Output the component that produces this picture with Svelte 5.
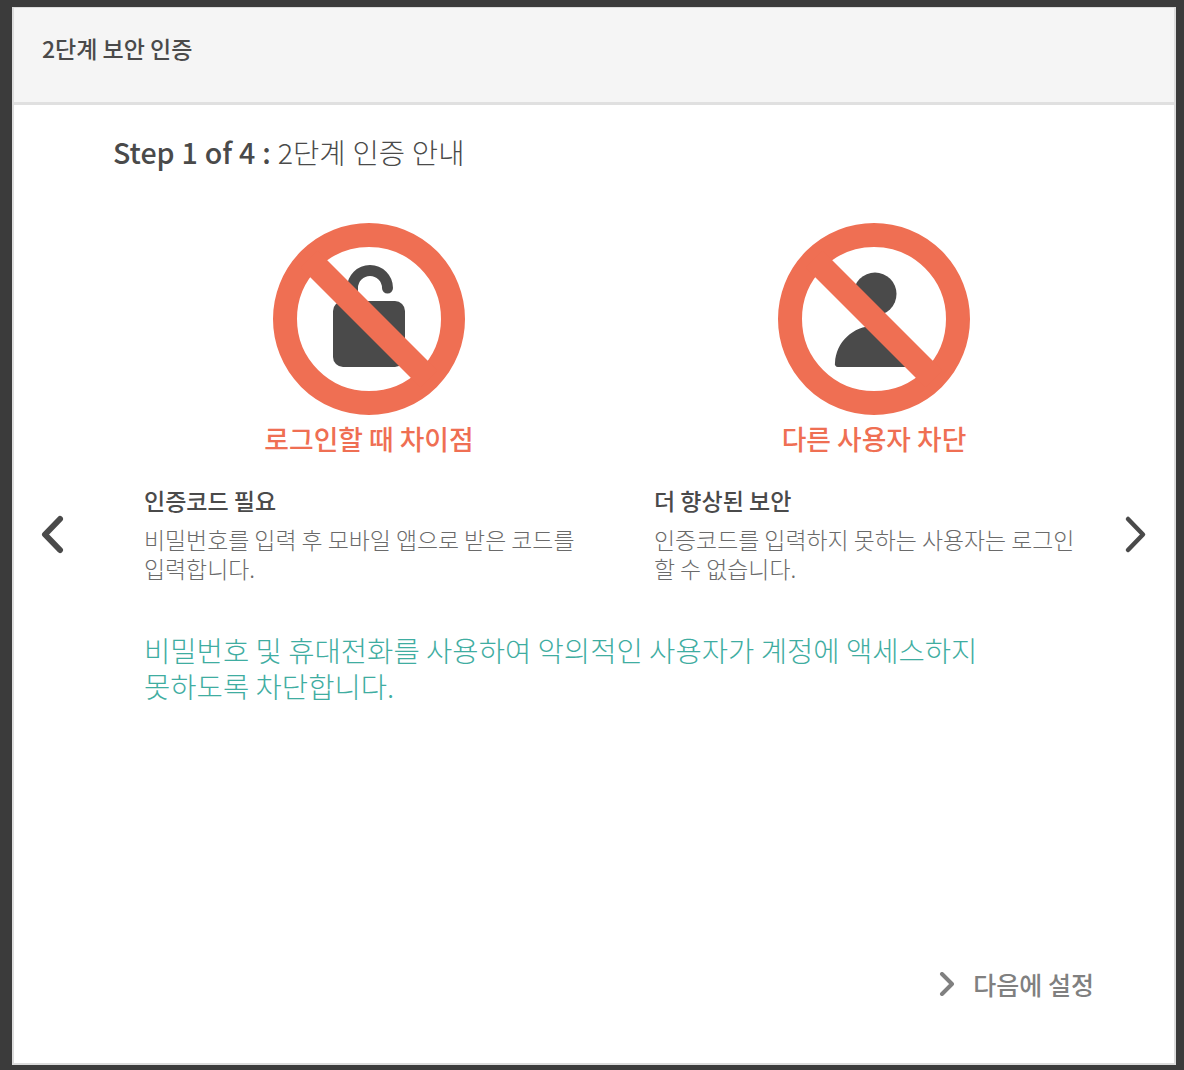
<script>
  const features = [
    {
      label: '로그인할 때 차이점',
      title: '인증코드 필요',
      text: '비밀번호를 입력 후 모바일 앱으로 받은 코드를 입력합니다.',
      icon: 'lock'
    },
    {
      label: '다른 사용자 차단',
      title: '더 향상된 보안',
      text: '인증코드를 입력하지 못하는 사용자는 로그인 할 수 없습니다.',
      icon: 'user'
    }
  ];
</script>

<div class="page">
  <div class="dialog">
    <header class="head">2단계 보안 인증</header>
    <main class="body">
      <h2 class="step"><strong>Step 1 of 4 :</strong> 2단계 인증 안내</h2>

      <div class="badges">
        {#each features as f}
          <div class="badge">
            <svg width="192" height="192" viewBox="0 0 192 192">
              {#if f.icon === 'lock'}
                <path d="M79.500 80V65a17.500 17.500 0 0 1 35 0" fill="none" stroke="#4a4a4a" stroke-width="11" stroke-linecap="round" />
                <rect x="60" y="78" width="72" height="66" rx="10" fill="#4a4a4a" />
              {:else}
                <circle cx="97" cy="71" r="21.500" fill="#4a4a4a" />
                <path d="M60 144a3 3 0 0 1-3-4c1-21 18-37 39-37s38 16 39 41z" fill="#4a4a4a" />
              {/if}
              <circle cx="96" cy="96" r="84" fill="none" stroke="#ef6f53" stroke-width="24" />
              <line x1="36" y1="36" x2="156" y2="156" stroke="#ef6f53" stroke-width="24" />
            </svg>
            <div class="label">{f.label}</div>
          </div>
        {/each}
      </div>

      <div class="carousel">
        <svg class="arrow" width="26" height="40" viewBox="0 0 26 40">
          <path d="M21 4 6 19.500 21 35" fill="none" stroke="#4a4a4a" stroke-width="6" stroke-linecap="round" stroke-linejoin="round" />
        </svg>
        <div class="columns">
          {#each features as f}
            <div class="col">
              <h3>{f.title}</h3>
              <p>{f.text}</p>
            </div>
          {/each}
        </div>
        <svg class="arrow" width="26" height="40" viewBox="0 0 26 40">
          <path d="M6 4 21 19.500 6 35" fill="none" stroke="#4a4a4a" stroke-width="4.500" stroke-linecap="round" stroke-linejoin="round" />
        </svg>
      </div>

      <p class="note">비밀번호 및 휴대전화를 사용하여 악의적인 사용자가 계정에 액세스하지 못하도록 차단합니다.</p>

      <div class="foot">
        <svg width="16" height="24" viewBox="0 0 16 24">
          <path d="M3 2 13 12 3 22" fill="none" stroke="#808080" stroke-width="4" stroke-linecap="round" stroke-linejoin="round" />
        </svg>
        <span>다음에 설정</span>
      </div>
    </main>
  </div>
</div>

<style>
  :global(body) {
    margin: 0;
    background: #3b3b3b;
  }

  .page {
    height: 1070px;
    box-sizing: border-box;
    padding: 7px 8px 5px 12px;
    font-family: "Noto Sans CJK KR", "Noto Sans", sans-serif;
    color: #4a4a4a;
  }

  .dialog {
    height: 100%;
    box-sizing: border-box;
    background: #fff;
    border: 2px solid #dcdcdc;
    border-top-width: 1px;
    display: flex;
    flex-direction: column;
  }

  .head {
    height: 94px;
    flex: none;
    background: #f5f5f5;
    border-bottom: 3px solid #e0e0e0;
    padding-left: 28px;
    font-size: 23px;
    font-weight: 500;
    line-height: 81px;
  }

  .body {
    flex: 1;
    display: flex;
    flex-direction: column;
  }

  .step {
    margin: 26px 0 0 99px;
    font-size: 28.600px;
    font-weight: 300;
    line-height: 42px;
    word-spacing: 0.5px;
  }

  .step strong {
    font-weight: 500;
  }

  .badges {
    display: flex;
    margin: 50px 0 0 259px;
    gap: 313px;
  }

  .badge {
    width: 192px;
    display: flex;
    flex-direction: column;
    align-items: center;
  }

  .badge svg {
    display: block;
  }

  .label {
    white-space: nowrap;
    color: #ef6f53;
    font-size: 26.800px;
    font-weight: 500;
    line-height: 38px;
    margin-top: 5px;
  }

  .carousel {
    display: flex;
    align-items: center;
    margin-top: 27px;
    padding: 0 26px 0 25px;
  }

  .arrow {
    flex: none;
    margin-top: 1px;
  }

  .columns {
    flex: 1;
    display: flex;
    padding-left: 79px;
    gap: 66px;
  }

  .col {
    width: 444px;
  }

  .col:last-child {
    width: 426px;
  }

  .col h3 {
    margin: 0;
    font-size: 23px;
    font-weight: 500;
    line-height: 30px;
    color: #4a4a4a;
  }

  .col p {
    margin: 10px 0 0;
    font-size: 22.900px;
    font-weight: 300;
    line-height: 29px;
    color: #6a6a6a;
  }

  .note {
    margin: 49px 0 0 130px;
    width: 860px;
    font-size: 28.600px;
    font-weight: 300;
    line-height: 36px;
    color: #3fada1;
  }

  .foot {
    margin-top: auto;
    margin-bottom: 61px;
    align-self: flex-end;
    margin-right: 80px;
    display: flex;
    align-items: center;
    gap: 18px;
    font-size: 25px;
    font-weight: 500;
    color: #808080;
  }
</style>
